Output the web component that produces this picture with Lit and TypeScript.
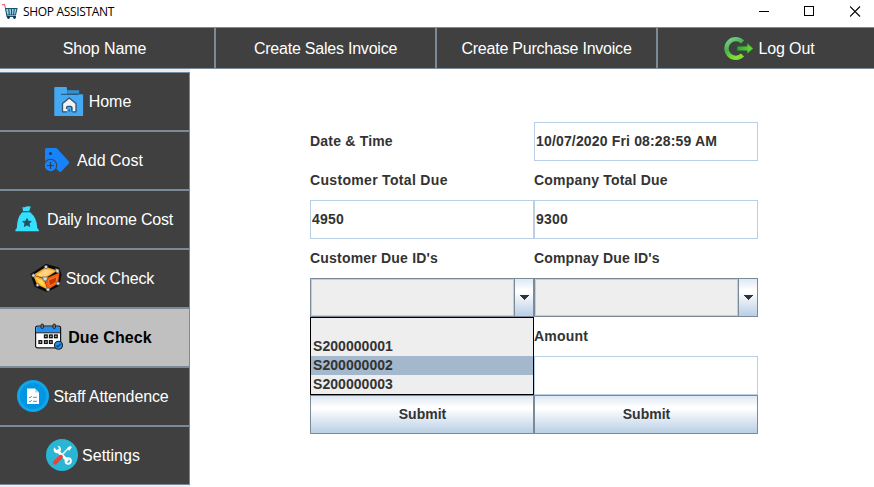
import { LitElement, html, svg, css } from "lit";
import { customElement } from "lit/decorators.js";
import { classMap } from "lit/directives/class-map.js";

const homeIcon = html`<svg width="32" height="32" viewBox="0 0 32 32">
  <path d="M1 2h12.500l.8 3h12v4h4v22H1z" fill="#3aa2e8" opacity=".45"/>
  <path d="M1.500 3q0-1 1-1h11l.6 2.500v5h14.900q1 0 1 1v19.500q0 1-1 1h-26.500q-1 0-1-1z" fill="#45a9f1"/>
  <path d="M14.500 5.500h11.500v3H14.500z" fill="#2f92d6"/>
  <path d="M8 9.300h18" stroke="#244f70" stroke-width="1"/>
  <path d="M9.500 18.500l6.700-5.500 6.800 5.500v8.300h-3.300v-4q0-1.300-1.300-1.300h-3q-1.300 0-1.300 1.300v4H9.500z" fill="#f2f2f4"/>
  <path d="M14 26.800H9.500v-8.300l6.700-5.500 6.800 5.500v8.300h-3.600M13.600 24v-1.500q0-1.200 1.200-1.200h2.800q1.200 0 1.200 1.200v4M16.200 26.800v-2.600" fill="none" stroke="#35506b" stroke-width="1.300" stroke-linejoin="round"/>
</svg>`;

const costIcon = html`<svg width="32" height="32" viewBox="0 0 32 32">
  <path d="M4 5.500q0-1.500 1.500-1.500h9q1 0 2 1L27.700 17.200q.9 1.300 0 2.500l-7.500 7.700q-1 1-2 0L15 24.500 4 17z" fill="#1683fb"/>
  <circle cx="9.500" cy="9.500" r="1.600" fill="#263c5c"/>
  <circle cx="9.500" cy="21.500" r="6.700" fill="#404040"/>
  <circle cx="9.500" cy="21.500" r="5.700" fill="#1683fb"/>
  <path d="M9.500 18v7M6 21.500h7" stroke="#303c50" stroke-width="1.200"/>
</svg>`;

const incomeIcon = html`<svg width="32" height="32" viewBox="0 0 32 32">
  <path d="M12 8L11.500 4q2.500 1 4.200-.8l4.100.3-1.600 4.500z" fill="#35e0ff"/>
  <path d="M10.800 10q0-1.300 1.200-1.300h6.500q1.200 0 1.200 1.300" fill="#28b9d8"/>
  <path d="M10.500 10h9.500q6 5 6.300 15.300 1.700.5 1.700 3H4.300q0-2.500 1.500-3Q6 15 10.500 10z" fill="#35e0ff"/>
  <path d="M16 15.500l1.300 2.700 3 .3-2.200 2 .6 3-2.700-1.500-2.700 1.500.6-3-2.200-2 3-.3z" fill="#1f5161" stroke="#1f5161" stroke-width=".8"/>
</svg>`;

const stockIcon = html`<svg width="32" height="32" viewBox="0 0 32 32">
  <path d="M1.500 12.500L16 3l12.500 3.500 2 6-2 10.500L17 29 5.500 24z" fill="#0b0b0b" stroke="#0b0b0b" stroke-width="2" stroke-linejoin="round"/>
  <path d="M3 13L16 5l11.500 3.500L15 16.500z" fill="#f9a72e"/>
  <path d="M6.500 13l9.500-6 8 2.200-9.500 6z" fill="#ffd47d"/>
  <path d="M3 13l11 4 3.500 10.500L7 22.500z" fill="#ffa928"/>
  <path d="M5.500 15.500l7 3 3 6.200-6-3.200z" fill="#ffd95b"/>
  <path d="M14.500 17l15-6.500-1.500 11L17.500 28z" fill="#f4590d"/>
  <path d="M18.500 18.300l8.500-3.800-1 6-6.500 3.500z" fill="#c43702" stroke="#ff8a32" stroke-width=".8"/>
  <g fill="#dadada" stroke="#555" stroke-width=".7">
    <path d="M12 15h6l-1.500 4H14z"/><circle cx="3.500" cy="13.500" r="1.700"/><circle cx="16" cy="5" r="1.700"/>
    <path d="M25.500 6.500l3.500 1v3.800l-3-1z"/><circle cx="7.500" cy="23" r="1.500"/><circle cx="18" cy="27.500" r="1.700"/><circle cx="28" cy="21.500" r="1.700"/>
  </g>
</svg>`;

const calendarCells = [
  [12.500, 14], [17.500, 14], [22.500, 14],
  [7, 19.700], [12.500, 19.700], [17.500, 19.700],
];

const dueIcon = html`<svg width="32" height="32" viewBox="0 0 32 32">
  <rect x="3.600" y="5.100" width="25" height="21.800" rx="2" fill="#fff" stroke="#151515" stroke-width="1.200"/>
  <path d="M4.200 11.500V7q0-1.300 1.300-1.300h21.200q1.300 0 1.300 1.300v4.500z" fill="#1e90f5"/>
  <path d="M3.500 11.800h25" stroke="#151515" stroke-width="1"/>
  <rect x="9" y="3" width="2.500" height="4.500" rx="1.200" fill="#777" stroke="#222"/>
  <rect x="21" y="3" width="2.500" height="4.500" rx="1.200" fill="#777" stroke="#222"/>
  ${calendarCells.map(([x, y]) => svg`<rect x=${x} y=${y} width="2.700" height="2.700" fill="#bbb" stroke="#111" stroke-width="1.300"/>`)}
  <circle cx="26.500" cy="24.300" r="4" fill="#1e90f5" stroke="#16202c" stroke-width="1.100"/>
  <path d="M24.500 24.800l1.300 1 2.700-2.900" fill="none" stroke="#12304e" stroke-width="1.100"/>
</svg>`;

const staffIcon = html`<svg width="32" height="32" viewBox="0 0 32 32">
  <circle cx="16" cy="16" r="16" fill="#12a5ea"/><circle cx="16" cy="16" r="13" fill="#0196e2"/>
  <path d="M10 8.500h8l4 4V24H10z" fill="#fff"/><path d="M18 8.500v4h4z" fill="#a8dcf6"/>
  <path d="M12 17l1 1 1.800-2M16 17.300h4M12 21l1 1 1.800-2M16 21.300h4" fill="none" stroke="#2fa5e2" stroke-width="1"/>
</svg>`;

const settingsIcon = html`<svg width="32" height="32" viewBox="0 0 32 32">
  <circle cx="16" cy="16" r="16" fill="#28b6d4"/>
  <path d="M11 11.500l11 10.500" stroke="#fff" stroke-width="3"/>
  <path d="M8 8.200l3 3 2-1.800-1.200-2.700q3.200.2 3.200 4.300-1 3.500-4.500 3.300-3.800-1-2.500-6.100z" fill="#fff"/>
  <circle cx="22.200" cy="22" r="2.700" fill="none" stroke="#fff" stroke-width="1.900"/>
  <path d="M14.500 17.500L22.500 9" stroke="#e9edf1" stroke-width="1.800"/>
  <path d="M21.500 9.300l3-2 .8.800-2.200 3.200z" fill="#fff" stroke="#fff"/>
  <path d="M9 23.500l5.800-5.500" stroke="#ef4136" stroke-width="4.200" stroke-linecap="round"/>
</svg>`;

const logoutIcon = html`<svg width="32" height="32" viewBox="0 0 32 32">
  <defs>
    <linearGradient id="ring" x1="0" y1="0" x2=".5" y2="1"><stop offset="0" stop-color="#7fcf93"/><stop offset=".5" stop-color="#4caf50"/><stop offset="1" stop-color="#86dc35"/></linearGradient>
    <linearGradient id="arrow" x1="0" y1="0" x2="1" y2="0"><stop offset="0" stop-color="#36a03c"/><stop offset="1" stop-color="#69de38"/></linearGradient>
  </defs>
  <path d="M20.300 9A9.300 9.300 0 1 0 20.300 22" fill="none" stroke="#2a4f2d" stroke-width="5.400"/>
  <path d="M20.500 9A9.300 9.300 0 1 0 20.500 22" fill="none" stroke="url(#ring)" stroke-width="4.300"/>
  <path d="M15 13.100h10V9.700l6.300 5.800-6.300 5.800v-3.400H15z" fill="url(#arrow)" stroke="#285e2b" stroke-width=".9"/>
</svg>`;

const cartIcon = html`<svg class="cart" width="16" height="16" viewBox="0 0 16 16">
  <path d="M0 .7h2.500l1 3.300" fill="none" stroke="#f5637c" stroke-width="1.200"/>
  <path d="M3.200 4.500h11.800l-1.500 6.500H5z" fill="#a5d3e2"/>
  <path d="M3 4.500h12.500M3.500 4.500l1.500 8h9M5 11h8.500l1.500-6.500M6.700 4.500l.6 6.500M9.500 4.500v6.500M12.300 4.500l-.8 6.500" fill="none" stroke="#15536f" stroke-width="1.100"/>
  <circle cx="6.500" cy="13.500" r="1.400" fill="#10374d"/><circle cx="12.500" cy="13.500" r="1.400" fill="#10374d"/>
</svg>`;

const menu = [
  { label: "Home", icon: homeIcon },
  { label: "Add Cost", icon: costIcon },
  { label: "Daily Income Cost", icon: incomeIcon, tight: true },
  { label: "Stock Check", icon: stockIcon, snug: true },
  { label: "Due Check", icon: dueIcon, active: true },
  { label: "Staff Attendence", icon: staffIcon, snug: true, nudge: true },
  { label: "Settings", icon: settingsIcon, nudge: true },
];

@customElement("due-combo")
class DueCombo extends LitElement {
  static styles = css`
    :host { display: flex; position: relative; box-sizing: border-box; border: 1px solid #7a8a99; }
    .value { flex: 1; border: 1px solid #b8cfe5; background: #eee; }
    .arrow { box-sizing: border-box; width: 19px; border-left: 1px solid #7a8a99; padding-bottom: 1px; padding-left: 4px;
      display: flex; align-items: center; justify-content: flex-start;
      background: linear-gradient(#dde8f3, #fff 30%, #fff 34%, #b8cfe5); }
  `;
  render() {
    return html`<div class="value"></div>
      <div class="arrow"><svg width="10" height="5" viewBox="0 0 10 5" shape-rendering="crispEdges"><path d="M0 0h10L5 5z" fill="#333"/></svg></div>
      <slot></slot>`;
  }
}

@customElement("app-root")
class AppRoot extends LitElement {
  static styles = css`
    :host { display: flex; flex-direction: column; width: 874px; height: 487px; overflow: hidden; background: #fff;
      font-family: "Liberation Sans", Arial, sans-serif; }
    * { box-sizing: border-box; }
    svg { display: block; flex: none; }
    .titlebar { height: 27px; flex: none; display: flex; align-items: center; padding: 0 13px 4px 2px;
      font: 12px/16px "Open Sans", "Noto Sans", sans-serif; color: #000; }
    .cart { margin: 0 5px 0 0; }
    .title { flex: 1; letter-spacing: -0.33px; }
    .controls { display: flex; gap: 35px; padding-bottom: 1px; }
    .header { height: 42px; flex: none; display: flex; margin-left: -6px; }
    .cell, .item { display: flex; align-items: center; justify-content: center; gap: 4px; flex: none;
      background: #404040; border: 1px solid #7a8a99; color: #fff; font-size: 16px; white-space: nowrap; }
    .cell { width: 221px; padding-top: 1px; letter-spacing: -.1px; }
    .tight { letter-spacing: -.22px; }
    .snug { letter-spacing: -.12px; }
    .body { flex: 1; display: flex; }
    .sidebar { width: 196px; margin-left: -6px; flex: none; background: #eee; padding: 3px 0 2px; }
    .item { height: 59px; }
    .item svg { margin-top: -1px; }
    .nudge { padding-left: 2px; }
    .active { background: #c0c0c0; color: #000; font-weight: bold; letter-spacing: .1px; }
    .form { display: grid; grid-template-columns: 224px 224px; grid-auto-rows: 39px; margin: 53px 0 0 120px;
      font-size: 14px; font-weight: bold; color: #333; letter-spacing: .2px; white-space: nowrap; }
    .label, .field { display: flex; align-items: center; padding-bottom: 2px; }
    .wide { letter-spacing: .32px; }
    .date { letter-spacing: .16px; }
    .field { border: 1px solid #b8cfe5; padding-left: 1px; }
    .submit { display: flex; align-items: center; justify-content: center; border: 1px solid #7a8a99; padding: 0 0 2px 1px;
      letter-spacing: 0; background: linear-gradient(#dde8f3, #fff 30%, #fff 34%, #b8cfe5); }
    .popup { position: absolute; z-index: 1; left: -1px; top: 38px; width: 224px; height: 78px; border: 1px solid #000; background: #eee; }
    .option { height: 19px; line-height: 19px; padding-left: 2px; letter-spacing: .05px; }
    .chosen { background: #a3b8cc; }
  `;

  render() {
    return html`
      <div class="titlebar">
        ${cartIcon}<span class="title">SHOP ASSISTANT</span>
        <div class="controls">
          <svg width="11" height="12" viewBox="0 0 11 12"><path d="M1 6.500h10" stroke="#000"/></svg>
          <svg width="11" height="12" viewBox="0 0 11 12"><rect x=".5" y="1.500" width="9" height="9" fill="none" stroke="#000"/></svg>
          <svg width="11" height="12" viewBox="0 0 11 12"><path d="M0 1.500l10 10M10 1.500l-10 10" stroke="#000" stroke-width="1.100"/></svg>
        </div>
      </div>
      <div class="header">
        <div class="cell"><span>Shop Name</span></div>
        <div class="cell tight"><span>Create Sales Invoice</span></div>
        <div class="cell tight"><span>Create Purchase Invoice</span></div>
        <div class="cell nudge">${logoutIcon}<span>Log Out</span></div>
      </div>
      <div class="body">
        <div class="sidebar">
          ${menu.map((m) => html`<div class=${classMap({ item: true, active: !!m.active, tight: !!m.tight, snug: !!m.snug, nudge: !!m.nudge })}>${m.icon}<span>${m.label}</span></div>`)}
        </div>
        <div class="form">
          <div class="label">Date &amp; Time</div><div class="field date">10/07/2020 Fri 08:28:59 AM</div>
          <div class="label wide">Customer Total Due</div><div class="label">Company Total Due</div>
          <div class="field">4950</div><div class="field">9300</div>
          <div class="label">Customer Due ID's</div><div class="label date">Compnay Due ID's</div>
          <due-combo>
            <div class="popup">
              <div class="option"></div>
              <div class="option">S200000001</div>
              <div class="option chosen">S200000002</div>
              <div class="option">S200000003</div>
            </div>
          </due-combo>
          <due-combo></due-combo>
          <div class="label"></div><div class="label">Amount</div>
          <div class="field"></div><div class="field"></div>
          <div class="submit">Submit</div><div class="submit">Submit</div>
        </div>
      </div>`;
  }
}
